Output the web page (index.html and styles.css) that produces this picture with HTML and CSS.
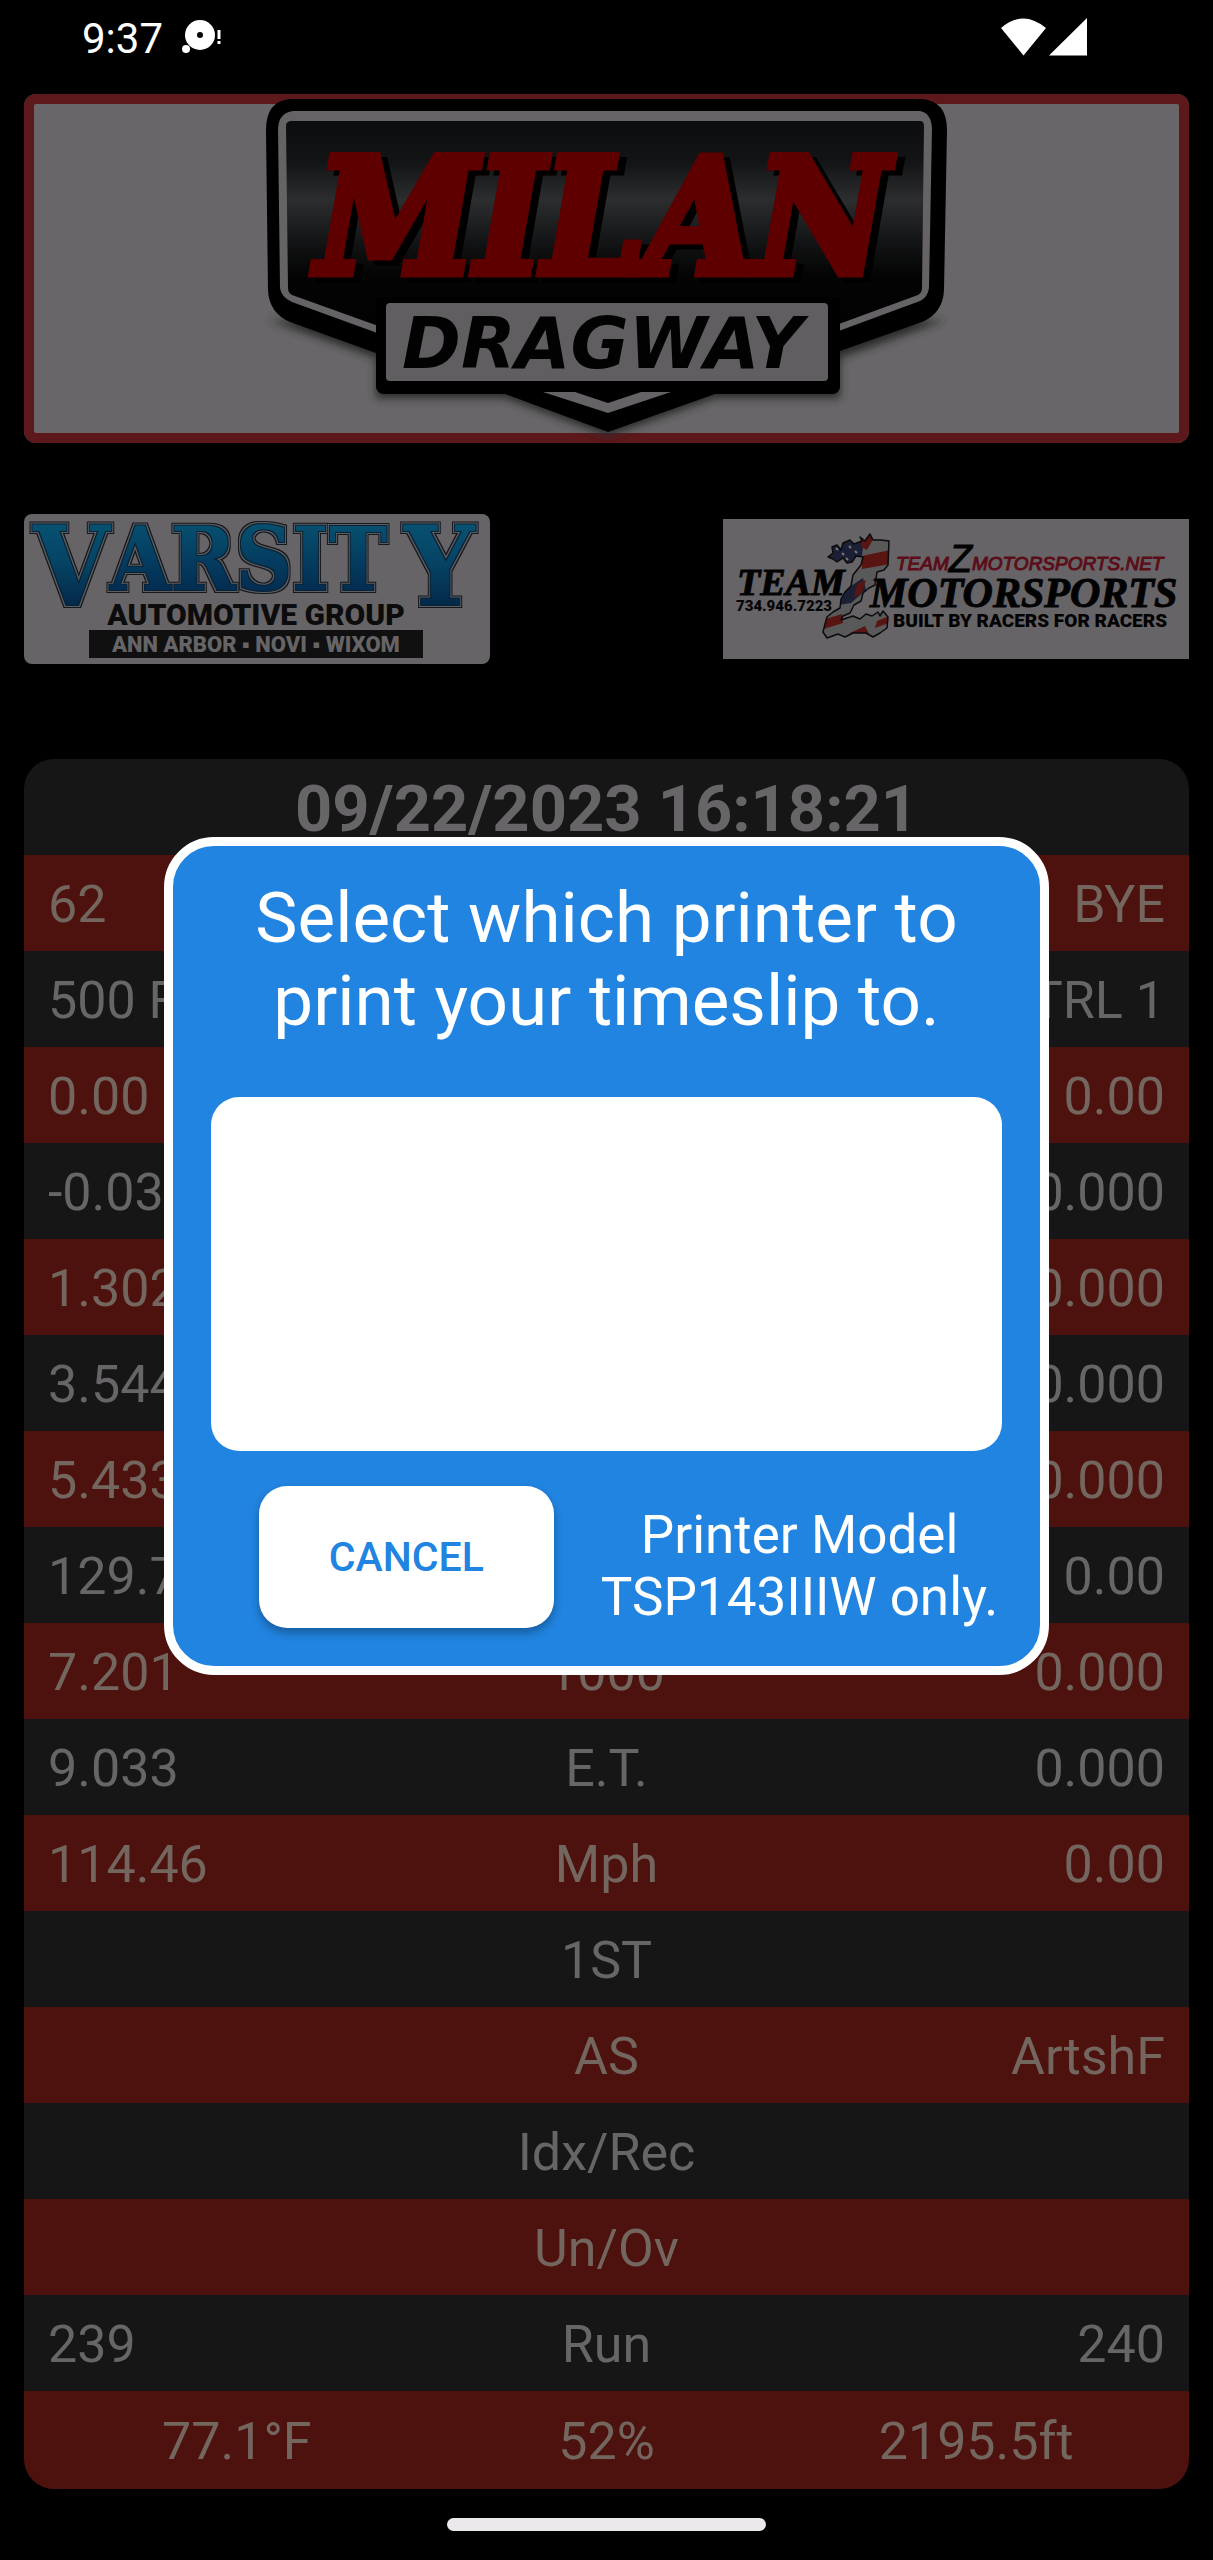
FILE: index.html
```html
<!DOCTYPE html>
<html lang="en">
<head>
<meta charset="utf-8">
<meta name="viewport" content="width=device-width, initial-scale=1">
<title>Milan Dragway Timeslip</title>
<link rel="stylesheet" href="styles.css">
</head>
<body>
<div class="screen">
  <header class="status">
    <div class="status-left">
      <span>9:37</span>
      <svg width="44" height="40" viewBox="0 0 44 40" aria-hidden="true">
        <circle cx="21" cy="17" r="15" fill="#fff"/><circle cx="21" cy="17" r="3" fill="#000"/>
        <circle cx="7" cy="31" r="4" fill="#fff"/>
        <path d="M38.500 12h3v9h-3zM38.500 23h3v3h-3z" fill="#fff"/>
      </svg>
    </div>
    <svg width="86" height="38" viewBox="0 0 86 38" aria-hidden="true">
      <path d="M0 10Q22-9 45 10L22.500 37.500zM86 0V37.500H48z" fill="#fff"/>
    </svg>
  </header>

  <main class="content">
    <div class="banner">
      <svg viewBox="24 94 1165 349" role="img" aria-label="Milan Dragway">
        <defs>
          <linearGradient id="steel" x1="0" y1="0" x2="0" y2="1">
            <stop offset="0" stop-color="#0c0d0e"/><stop offset=".2" stop-color="#131415"/>
            <stop offset=".38" stop-color="#2b2d2f"/><stop offset=".6" stop-color="#111213"/>
            <stop offset=".75" stop-color="#040404"/><stop offset="1" stop-color="#020202"/>
          </linearGradient>
          <filter id="soft" x="-10%" y="-10%" width="120%" height="120%"><feGaussianBlur stdDeviation="4"/></filter>
        </defs>
        <path d="M269 320L376 358V398H505L608 436L715 398H840V358L945 320z" fill="#2c2b2c" filter="url(#soft)"/>
        <path d="M290 99H922Q947 101 947 130L944 290Q943 313 922 322L840 351V385Q840 394 831 394H715L608 432L505 394H386Q376 394 376 385V353L290 322Q269 313 268 290L266 130Q266 101 290 99z" fill="#000"/>
        <path d="M293 111H920Q931 113 932 128L929 288Q928 297 920 301L836 332V320H380V334L292 302Q281 297 280 288L278 128Q279 113 293 111z" fill="#656365"/>
        <path d="M292 121H920Q924 121 924 126L922 288Q922 293 918 295L828 328H384L292 295Q288 293 288 288L286 126Q286 121 292 121z" fill="url(#steel)"/>
        <path d="M376 297H840V385Q840 394 831 394H386Q376 394 376 385z" fill="#000"/>
        <rect x="386" y="303" width="442" height="78" rx="4" fill="#605e60"/>
        <path d="M543 392H575L608 403L641 392H671L608 413z" fill="#656365"/>
        <text class="milan" x="317" y="273">MILAN</text>
        <text class="dragway" x="402" y="368">DRAGWAY</text>
      </svg>
    </div>

    <div class="sponsors">
      <svg class="sponsor rounded" viewBox="24 514 466 150" role="img" aria-label="Varsity Automotive Group">
        <defs>
          <linearGradient id="blue" gradientUnits="userSpaceOnUse" x1="0" y1="520" x2="0" y2="626">
            <stop offset="0" stop-color="#075272"/><stop offset=".4" stop-color="#064465"/><stop offset="1" stop-color="#021c3c"/>
          </linearGradient>
          <linearGradient id="blue-short" gradientUnits="userSpaceOnUse" x1="0" y1="520" x2="0" y2="594">
            <stop offset="0" stop-color="#075272"/><stop offset="1" stop-color="#022b50"/>
          </linearGradient>
          <filter id="collegiate" x="-5%" y="-5%" width="110%" height="110%" color-interpolation-filters="sRGB">
            <feMorphology in="SourceAlpha" operator="dilate" radius="3" result="outer"/>
            <feFlood flood-color="#14171d"/><feComposite in2="outer" operator="in" result="edge"/>
            <feMorphology in="SourceAlpha" operator="dilate" radius="2" result="inner"/>
            <feFlood flood-color="#5d5e62"/><feComposite in2="inner" operator="in" result="gap"/>
            <feMorphology in="SourceAlpha" operator="dilate" radius="1" result="core"/>
            <feFlood flood-color="#0b2233"/><feComposite in2="core" operator="in" result="rim"/>
            <feMerge><feMergeNode in="edge"/><feMergeNode in="gap"/><feMergeNode in="rim"/><feMergeNode in="SourceGraphic"/></feMerge>
          </filter>
        </defs>
        <g class="varsity" filter="url(#collegiate)">
          <text class="tall" x="33" y="605">V</text>
          <text x="110" y="590">ARSIT</text>
          <text class="tall" x="404" y="605">Y</text>
        </g>
        <text class="group" x="256" y="625" text-anchor="middle">AUTOMOTIVE GROUP</text>
        <rect x="89" y="630" width="334" height="28" fill="#101010"/>
        <text class="cities" x="256" y="652" text-anchor="middle">ANN ARBOR ▪ NOVI ▪ WIXOM</text>
      </svg>

      <svg class="sponsor" viewBox="723 519 466 140" role="img" aria-label="Team Z Motorsports">
        <defs>
          <clipPath id="flag"><path id="zee" d="M828 557L833 553L832 547L837 545L841 550L843 543L850 540L854 544L862 541L860 537L865 541L870 534L873 540L881 540L889 541L888 565L884 570L877 572L875 585L869 588L863 593L861 601L854 605L850 613L843 616L841 620L853 616L860 619L866 614L872 616L878 612L880 616L883 611L888 617L887 628L880 633L873 637L866 633L853 633L845 637L838 634L827 638L823 632L825 624L827 617L833 612L840 608L841 599L845 592L851 586L853 575L861 565L863 557L856 556L852 562L847 563L843 558L837 562L833 559z"/></clipPath>
        </defs>
        <g clip-path="url(#flag)">
          <path d="M820 530h72v112h-72z" fill="#5a595a"/>
          <path d="M820 530h45l-4 34h-41zM845 590l18-12 3 12-15 13-12 2z" fill="#1c2036"/>
          <path d="M863 534l12 2-8 14-6-3zM862 556l28-6v14l-28 5zM857 584l9-4-4 13-8 5zM822 620l20-6 1 9-22 7zM850 633l15-7 4 8-10 7zM877 621l12-5v7l-14 5z" fill="#581512"/>
          <path d="M836 548l2 2M842 553l2 2M849 546l2 2M855 551l2 2M846 558l2 2" stroke="#777" stroke-width="2"/>
        </g>
        <use href="#zee" fill="none" stroke="#0b0b0e" stroke-width="1.500" stroke-linejoin="round"/>
        <text class="team" x="737" y="595">TEAM</text>
        <text class="phone" x="736" y="611">734.946.7223</text>
        <text class="moto" x="870" y="607">MOTORSPORTS</text>
        <text class="script" x="896" y="570">TEAM<tspan class="script-z" dy="2">Z</tspan><tspan dy="-2">MOTORSPORTS.NET</tspan></text>
        <text class="built" x="893" y="627">BUILT BY RACERS FOR RACERS</text>
      </svg>
    </div>

    <section class="slip">
      <table>
        <caption>09/22/2023 16:18:21</caption>
        <tbody>
          <tr><td>62</td><th scope="row"></th><td>BYE</td></tr>
          <tr><td>500 F</td><th scope="row"></th><td>CTRL 1</td></tr>
          <tr><td>0.00</td><th scope="row"></th><td>0.00</td></tr>
          <tr><td>-0.03</td><th scope="row"></th><td>0.000</td></tr>
          <tr><td>1.302</td><th scope="row"></th><td>0.000</td></tr>
          <tr><td>3.544</td><th scope="row"></th><td>0.000</td></tr>
          <tr><td>5.433</td><th scope="row"></th><td>0.000</td></tr>
          <tr><td>129.7</td><th scope="row"></th><td>0.00</td></tr>
          <tr><td>7.201</td><th scope="row">1000</th><td>0.000</td></tr>
          <tr><td>9.033</td><th scope="row">E.T.</th><td>0.000</td></tr>
          <tr><td>114.46</td><th scope="row">Mph</th><td>0.00</td></tr>
          <tr><td></td><th scope="row">1ST</th><td></td></tr>
          <tr><td></td><th scope="row">AS</th><td>ArtshF</td></tr>
          <tr><td></td><th scope="row">Idx/Rec</th><td></td></tr>
          <tr><td></td><th scope="row">Un/Ov</th><td></td></tr>
          <tr><td>239</td><th scope="row">Run</th><td>240</td></tr>
        </tbody>
      </table>
      <div class="weather"><span>77.1°F</span><span>52%</span><span>2195.5ft</span></div>
    </section>
  </main>

  <div class="home-bar"></div>

  <div class="overlay">
    <div class="dialog" role="dialog" aria-labelledby="dialog-title">
      <h1 id="dialog-title">Select which printer to print your timeslip to.</h1>
      <div class="printers" role="listbox" aria-labelledby="dialog-title"></div>
      <div class="actions">
        <button type="button">CANCEL</button>
        <p>Printer Model<br>TSP143IIIW only.</p>
      </div>
    </div>
  </div>
</div>
</body>
</html>
```
FILE: styles.css
```css
* { box-sizing: border-box; }

body {
  margin: 0;
  background: #000;
  font-family: Roboto, "Liberation Sans", sans-serif;
}

.screen {
  position: relative;
  min-height: 100vh;
  display: flex;
  flex-direction: column;
}

/* Status bar */
.status {
  display: flex;
  justify-content: space-between;
  align-items: flex-start;
  padding: 18px 126px 0 82px;
  height: 94px;
  color: #fff;
}
.status-left {
  display: flex;
  gap: 16px;
  font-size: 42px;
  line-height: 42px;
}

.content { padding: 0 24px; }

/* Track banner */
.banner {
  background: #686668;
  border-radius: 12px;
  box-shadow: inset 0 0 0 10px #5c181b;
}
.banner svg { display: block; width: 100%; }
.milan {
  font: italic bold 160px "DejaVu Serif Condensed", "DejaVu Serif", serif;
  fill: #5f0000;
  stroke: #5f0000;
  stroke-width: 9px;
  filter: drop-shadow(7px 5px 0 #000);
}
.dragway {
  font: italic bold 71px "DejaVu Sans", sans-serif;
  fill: #020202;
}

/* Sponsors */
.sponsors {
  display: flex;
  justify-content: space-between;
  align-items: center;
  padding: 71px 0 95px;
}
.sponsor { display: block; width: 40%; background: #666466; }
.rounded { border-radius: 8px; }
.varsity {
  font: bold 87px "DejaVu Serif Condensed", "DejaVu Serif", serif;
  fill: url(#blue-short);
}
.tall { font-size: 110px; fill: url(#blue); }
.group { font: 900 30px Roboto, sans-serif; fill: #0c0c0d; }
.cities { font: 900 22px Roboto, sans-serif; fill: #666466; }
.team { font: italic bold 38px "Liberation Serif", serif; fill: #020203; stroke: #020203; }
.moto { font: italic bold 42px "Liberation Serif", serif; fill: #020203; stroke: #020203; }
.phone { font: 900 15px Roboto, sans-serif; fill: #060607; }
.script { font: italic 19px "Liberation Sans", sans-serif; fill: #5b0d18; stroke: #5b0d18; }
.script-z { font-size: 38px; fill: #020203; stroke: #020203; }
.built { font: 900 19px Roboto, sans-serif; fill: #020203; }

/* Time slip */
.slip {
  overflow: hidden;
  border-radius: 30px;
  font-size: 52px;
  line-height: 92px;
  color: #676567;
}
table {
  width: 100%;
  table-layout: fixed;
  border-collapse: collapse;
}
caption {
  height: 96px;
  padding-top: 4px;
  background: #171617;
  font-size: 65px;
  font-weight: bold;
}
tr { height: 96px; background: #171617; }
tr:nth-child(odd) { background: #4d110e; color: #73665f; }
td, th { padding: 4px 24px 0; font-weight: normal; white-space: nowrap; }
td:first-child { text-align: left; }
td:last-child { text-align: right; }
.weather {
  display: grid;
  grid-template-columns: repeat(3, 1fr);
  padding: 5px 28px 1px;
  background: #4d110e;
  color: #73665f;
  text-align: center;
}

.home-bar {
  width: 319px;
  height: 13px;
  margin: 29px auto;
  border-radius: 7px;
  background: #ebe9ec;
}

/* Printer dialog */
.overlay {
  position: absolute;
  inset: 0 0 48px;
  display: flex;
  align-items: center;
  justify-content: center;
}
.dialog {
  width: 73%;
  padding: 30px 38px 38px;
  border: 9px solid #fff;
  border-radius: 50px;
  background: #2184e0;
  color: #fff;
}
h1 {
  margin: 0 0 55px;
  font-size: 71px;
  font-weight: normal;
  line-height: 83px;
  text-align: center;
}
.printers { height: 354px; border-radius: 28px; background: #fff; }
.actions {
  display: flex;
  align-items: flex-end;
  gap: 47px;
  padding: 35px 0 0 48px;
}
button {
  width: 295px;
  height: 142px;
  border: 0;
  border-radius: 28px;
  background: #fff;
  box-shadow: 0 5px 8px rgba(0, 0, 0, .3);
  color: #2184e0;
  font: 500 41px Roboto, "Liberation Sans", sans-serif;
}
p {
  margin: 0;
  font-size: 53px;
  line-height: 62px;
  text-align: center;
  white-space: nowrap;
}
```
